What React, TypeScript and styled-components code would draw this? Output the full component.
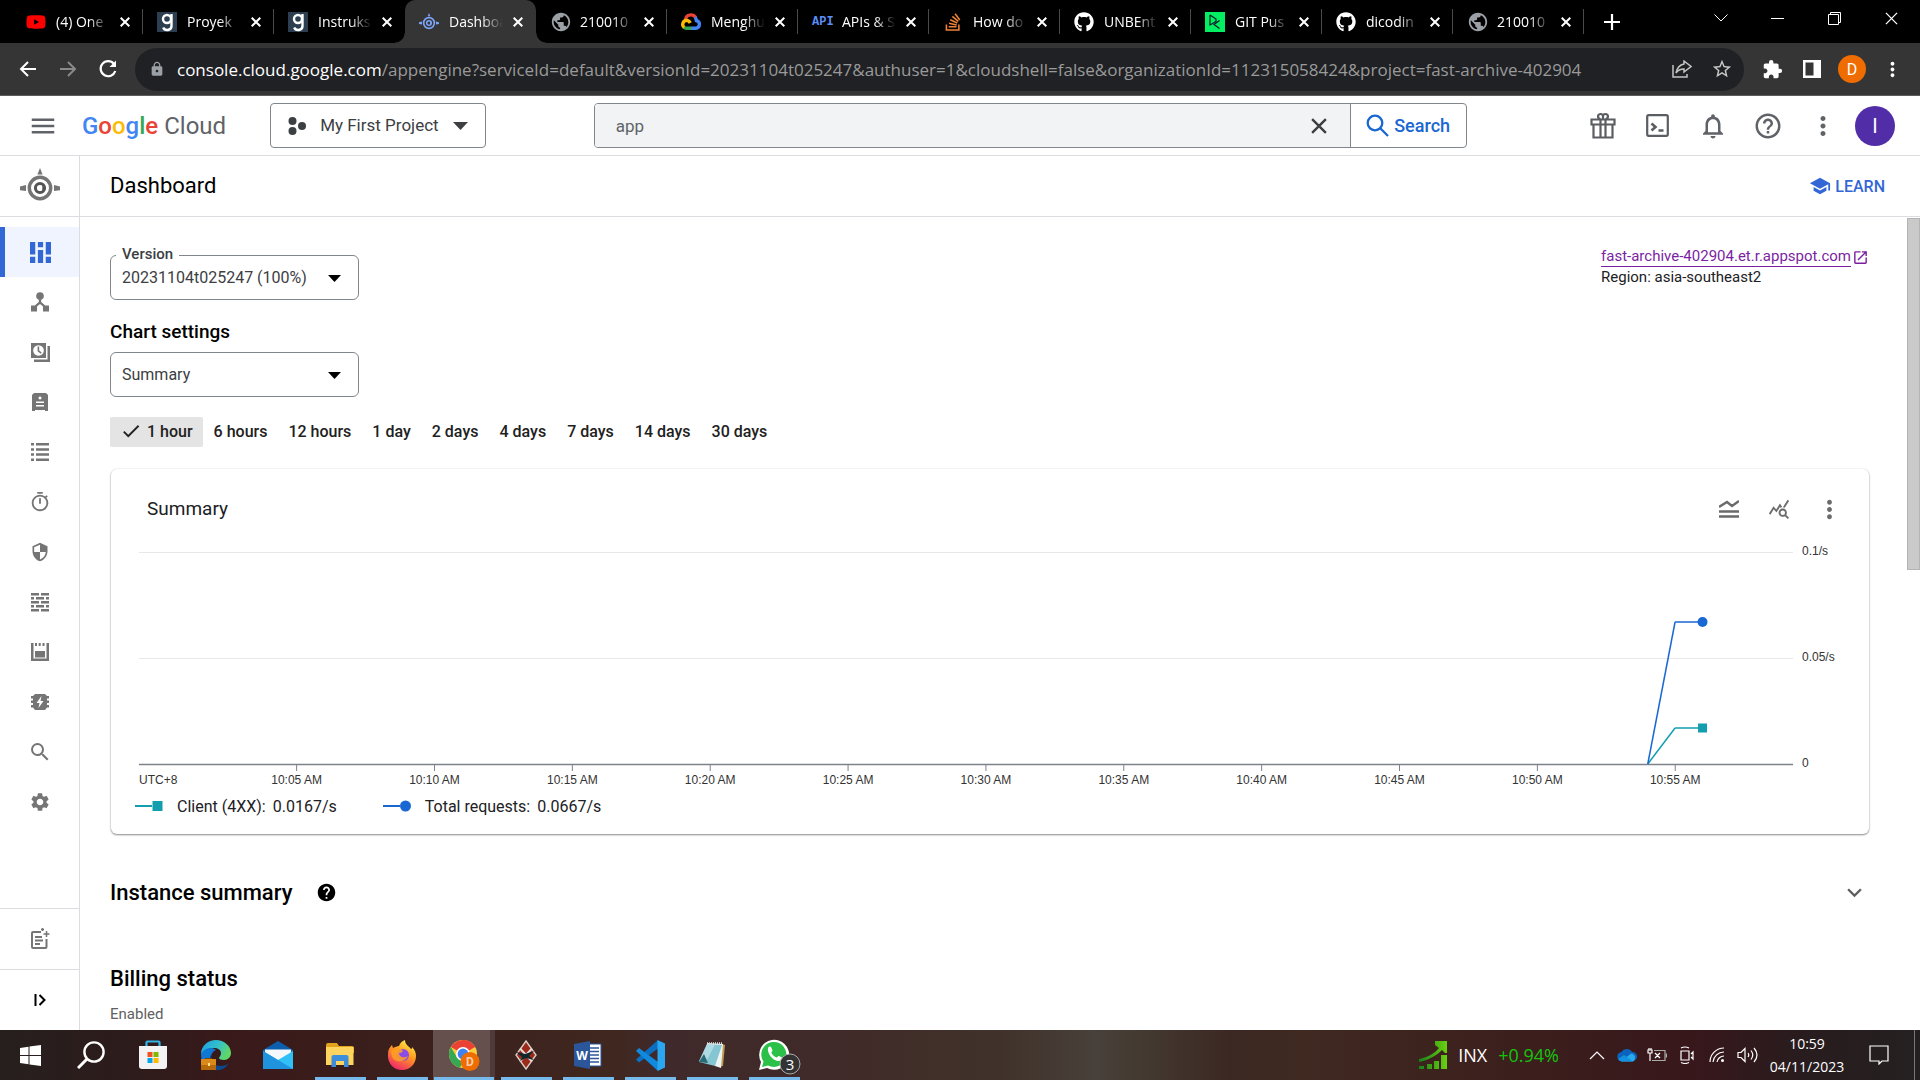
import React from "react";
import styled, { createGlobalStyle, css } from "styled-components";
import {
  MdMenu, MdSearch, MdHelpOutline, MdMoreVert, MdNotificationsNone, MdSchool, MdOpenInNew,
  MdSecurity, MdSettings, MdHelp, MdExpandMore, MdCheck, MdExtension, MdStarBorder, MdLock,
  MdPublic, MdOutlineTimer, MdQueryStats,
} from "react-icons/md";
import { FaGithub, FaStackOverflow, FaYoutube } from "react-icons/fa";

const roboto = `Roboto, "Noto Sans", sans-serif`;
const segoe = `"Open Sans", "Noto Sans", sans-serif`;

const GlobalStyle = createGlobalStyle`
  *, *::before, *::after { box-sizing: border-box; }
  body { margin: 0; font-family: ${roboto}; color: #000; background: #fff; }
  button, input, select { font: inherit; color: inherit; border: 0; background: none; padding: 0; margin: 0; }
  button { cursor: pointer; }
  h1, h2, h3, p { margin: 0; }
  svg { display: block; flex: none; }
`;

/* ---------- Browser window ---------- */

const Desktop = styled.div`
  display: flex;
  flex-direction: column;
  height: 100vh;
  overflow: hidden;
`;

const TabStrip = styled.div`
  display: flex;
  height: 43px;
  padding-left: 12px;
  background: #000;
  color: #fff;
  font-family: ${segoe};
  flex: none;
`;

const tabLine = css`
  &::after {
    content: "";
    position: absolute;
    right: 0;
    top: 9px;
    width: 1px;
    height: 25px;
    background: #4a4a4a;
  }
`;

const tabFlare = css`
  &::before, &::after {
    content: "";
    position: absolute;
    bottom: 0;
    width: 10px;
    height: 10px;
  }
  &::before { left: -10px; background: radial-gradient(circle at 0 0, transparent 9px, #353535 10px); }
  &::after { right: -10px; background: radial-gradient(circle at 100% 0, transparent 9px, #353535 10px); }
`;

const Tab = styled.div<{ $active?: boolean; $noLine?: boolean }>`
  position: relative;
  display: flex;
  align-items: center;
  width: 131px;
  padding: 0 13px 0 14px;
  gap: 10px;
  font-size: 14px;
  border-radius: 10px 10px 0 0;
  background: ${(p) => (p.$active ? "#353535" : "transparent")};
  ${(p) => (p.$active ? tabFlare : p.$noLine ? "" : tabLine)}
`;

const TabTitle = styled.span`
  flex: 1;
  min-width: 0;
  overflow: hidden;
  white-space: nowrap;
  mask-image: linear-gradient(to right, #000 60%, transparent 100%);
`;

const BareButton = styled.button`
  display: flex;
  align-items: center;
  justify-content: center;
  flex: none;
`;

const NewTab = styled(BareButton)`
  width: 55px;
`;

const WindowButtons = styled.div`
  display: flex;
  margin-left: auto;
  padding-bottom: 7px;
  ${BareButton} { width: 57px; }
`;

const Toolbar = styled.div`
  display: flex;
  align-items: center;
  height: 53px;
  padding: 0 8px;
  background: #353535;
  border-bottom: 1px solid #5c5c5c;
  color: #fff;
  font-family: ${segoe};
  flex: none;
  & > ${BareButton} { width: 40px; height: 40px; }
`;

const AddressBar = styled.div`
  display: flex;
  align-items: center;
  flex: 1;
  height: 43px;
  margin: 0 8px 0 7px;
  padding: 0 2px 0 14px;
  border-radius: 22px;
  background: #202124;
  ${BareButton} { width: 40px; height: 40px; }
`;

const Address = styled.p`
  flex: 1;
  margin-left: 12px;
  font-size: 17px;
  white-space: nowrap;
  overflow: hidden;
  color: #9a9a9a;
  b { font-weight: 400; color: #fff; }
`;

const Profile = styled.span`
  display: grid;
  place-items: center;
  width: 28px;
  height: 28px;
  border-radius: 50%;
  background: #ef6c00;
  font: 16px ${roboto};
`;

/* ---------- Cloud console ---------- */

const Page = styled.div`
  display: flex;
  flex-direction: column;
  flex: 1;
  min-height: 0;
`;

const Header = styled.header`
  display: flex;
  align-items: center;
  height: 60px;
  padding: 0 25px 0 28px;
  border-bottom: 1px solid #dadce0;
  color: #5f6368;
  flex: none;
`;

const Logo = styled.a`
  display: flex;
  gap: 6px;
  margin-left: 24px;
  font-size: 24px;
  text-decoration: none;
  color: #5f6368;
`;

const Letter = styled.span<{ $c: string }>`
  color: ${(p) => p.$c};
  font-weight: 500;
`;

const ProjectButton = styled.button`
  display: flex;
  align-items: center;
  gap: 12px;
  height: 45px;
  margin-left: 44px;
  padding: 0 17px;
  border: 1px solid #80868b;
  border-radius: 4px;
  font-size: 17px;
  color: #3c4043;
  span { padding: 0 2px 2px; }
`;

const SearchBox = styled.form`
  display: flex;
  width: 873px;
  height: 45px;
  margin-left: 108px;
  border: 1px solid #80868b;
  border-radius: 4px;
  overflow: hidden;
`;

const SearchField = styled.div`
  display: flex;
  flex: 1;
  background: #f1f3f4;
  border-right: 1px solid #80868b;
  color: #3c4043;
  input { flex: 1; padding: 0 21px; font-size: 17px; color: #5f6368; outline: none; }
  button { width: 62px; }
`;

const SearchButton = styled.button`
  display: flex;
  align-items: center;
  justify-content: center;
  gap: 5px;
  width: 115px;
  font-size: 18px;
  font-weight: 500;
  color: #1967d2;
`;

const HeaderIcons = styled.nav`
  display: flex;
  align-items: center;
  margin-left: auto;
  ${BareButton} { width: 55px; height: 40px; }
`;

const Avatar = styled.button`
  width: 40px;
  height: 40px;
  margin-left: 5px;
  border-radius: 50%;
  background: #512da8;
  color: #fff;
  font-size: 20px;
`;

const Body = styled.div`
  display: flex;
  flex: 1;
  min-height: 0;
`;

const Rail = styled.nav`
  display: flex;
  flex-direction: column;
  width: 80px;
  flex: none;
  border-right: 1px solid #dadce0;
  color: #757575;
`;

const RailCell = styled.div<{ $edge: "top" | "bottom" }>`
  display: grid;
  place-items: center;
  height: 61px;
  flex: none;
  border-${(p) => p.$edge}: 1px solid #dadce0;
`;

const RailList = styled.div`
  flex: 1;
  padding-top: 10px;
`;

const RailLink = styled.a<{ $active?: boolean }>`
  display: grid;
  place-items: center;
  height: 50px;
  padding-right: ${(p) => (p.$active ? 4 : 0)}px;
  color: ${(p) => (p.$active ? "#3367d6" : "#757575")};
  background: ${(p) => (p.$active ? "#f0f4fe" : "transparent")};
  border-left: ${(p) => (p.$active ? "5px solid #3367d6" : "0")};
`;

const Main = styled.main`
  display: flex;
  flex-direction: column;
  flex: 1;
  min-width: 0;
`;

const TitleBar = styled.div`
  display: flex;
  align-items: center;
  justify-content: space-between;
  height: 61px;
  padding: 0 35px 0 30px;
  border-bottom: 1px solid #dadce0;
  flex: none;
  h1 { padding-bottom: 2px; font-size: 22px; font-weight: 400; }
`;

const Learn = styled.button`
  display: flex;
  align-items: center;
  gap: 4px;
  font-size: 16px;
  font-weight: 500;
  color: #3367d6;
`;

const Scroller = styled.div`
  display: flex;
  flex: 1;
  min-height: 0;
`;

const ScrollTrack = styled.div`
  width: 13px;
  padding-top: 1px;
  flex: none;
`;

const ScrollThumb = styled.div`
  height: 352px;
  background: #cacaca;
  border: 1px solid #b4b4b4;
`;

const Content = styled.div`
  flex: 1;
  min-width: 0;
  padding: 30px 38px 0 30px;
  overflow: hidden;
`;

const TopRow = styled.div`
  display: flex;
  justify-content: space-between;
  align-items: flex-start;
`;

const Location = styled.div`
  font-size: 15px;
  line-height: 20px;
  color: #202124;
`;

const AppLink = styled.a`
  display: flex;
  align-items: center;
  gap: 1px;
  color: #7b1fa2;
  text-decoration: none;
  span { border-bottom: 1px solid #7b1fa2; line-height: 19px; }
`;

const Field = styled.div`
  position: relative;
  width: 249px;
  height: 45px;
  border: 1px solid #80868b;
  border-radius: 6px;
  label {
    position: absolute;
    left: 5px;
    top: -12px;
    padding: 0 6px;
    background: #fff;
    font-size: 15px;
    line-height: 20px;
    font-weight: 500;
    color: #3c4043;
  }
  select {
    width: 100%;
    height: 100%;
    padding-left: 11px;
    appearance: none;
    font-size: 16px;
    color: #3c4043;
    outline: none;
  }
  svg { position: absolute; right: 17px; top: 19px; pointer-events: none; }
`;

const Versions = styled.div`
  padding-top: 8px;
`;

const SettingsTitle = styled.h3`
  margin: 20px 0 8px;
  font-size: 19px;
  line-height: 24px;
  font-weight: 500;
`;

const Ranges = styled.div`
  display: flex;
  gap: 1px;
  margin-top: 20px;
`;

const Range = styled.button<{ $on?: boolean }>`
  display: flex;
  align-items: center;
  gap: 5px;
  height: 30px;
  padding: 0 10px 2px;
  border-radius: 2px;
  font-size: 16px;
  font-weight: 500;
  color: #212121;
  background: ${(p) => (p.$on ? "#e4e4e4" : "transparent")};
`;

const Card = styled.section`
  margin: 22px 0 0 1px;
  padding: 15px 0 14px;
  border-radius: 6px;
  box-shadow: 0 1px 2px rgba(0, 0, 0, 0.45), 0 0 2px rgba(0, 0, 0, 0.1);
`;

const CardHead = styled.div`
  display: flex;
  align-items: center;
  height: 50px;
  padding: 0 15px 0 36px;
  color: #6b6b6b;
  h2 { flex: 1; padding-bottom: 2px; font-size: 19px; font-weight: 400; color: #202124; }
  ${BareButton} { width: 50px; height: 50px; }
`;

const ChartArea = styled.div`
  padding: 0 76px 0 28px;
  & > svg { width: 100%; height: 256px; overflow: visible; }
  text { font: 12px "Liberation Sans", Arial, sans-serif; fill: #333; }
`;

const Legend = styled.div`
  display: flex;
  gap: 46px;
  height: 30px;
  padding: 2px 0 0 24px;
`;

const LegendItem = styled.div`
  display: flex;
  align-items: center;
  font-size: 16px;
  color: #202124;
  svg { margin-right: 14px; }
  span { margin-right: 7px; }
`;

const SectionHead = styled.div<{ $gap: number }>`
  display: flex;
  align-items: center;
  margin-top: ${(p) => p.$gap}px;
  height: 32px;
  h2 { font-size: 22px; font-weight: 500; margin-right: 24px; }
  button { margin-left: auto; color: #5f5f5f; }
`;

const Status = styled.p`
  margin-top: 10px;
  font-size: 15px;
  line-height: 20px;
  color: #616161;
`;

/* ---------- Windows taskbar ---------- */

const Taskbar = styled.footer`
  display: flex;
  height: 50px;
  flex: none;
  color: #fff;
  font-family: ${segoe};
  background: linear-gradient(90deg, #261f1e 0%, #2d1c1b 7%, #3a191a 12%, #3a1f1c 20%, #40271f 32%, #40292a 34%, #402b29 45%, #40322a 52%, #48403a 57%, #42382f 60%, #3c2823 64%, #3f2921 68%, #3c201d 78%, #38171b 88%, #281c1e 94%, #242021 100%);
`;

const TaskButton = styled.button<{ $w: number; $open?: boolean; $active?: boolean }>`
  position: relative;
  display: grid;
  place-items: center;
  width: ${(p) => p.$w}px;
  background: ${(p) => (p.$active ? "linear-gradient(90deg, #65504d 57px, #50393a 57px)" : "transparent")};
  &::after {
    content: "";
    position: absolute;
    left: ${(p) => (p.$active ? 1 : 6)}px;
    right: ${(p) => (p.$active ? 1 : 5)}px;
    bottom: 0;
    height: ${(p) => (p.$open ? 3 : 0)}px;
    background: #76b9ed;
  }
`;

const Tray = styled.div`
  display: flex;
  align-items: center;
  margin-left: auto;
`;

const Stock = styled.button`
  display: flex;
  align-items: center;
  gap: 11px;
  margin-right: 23px;
  font-size: 18px;
  span { color: #13c40f; }
`;

const TrayButton = styled(BareButton)`
  width: 30px;
  height: 50px;
`;

const Clock = styled.time`
  width: 90px;
  font-size: 14px;
  line-height: 23px;
  text-align: center;
`;

const Notifications = styled(BareButton)`
  width: 54px;
  height: 50px;
`;

const ShowDesktop = styled.div`
  width: 6px;
  height: 50px;
  margin-left: 8px;
  border-left: 1px solid #7b7474;
`;

/* ---------- Drawings ---------- */

const CloseMark = ({ s = 10, w = 2 }: { s?: number; w?: number }) => (
  <svg width={s} height={s} viewBox="0 0 10 10" stroke="currentColor" strokeWidth={w}>
    <path d="M.7.7l8.6 8.6M9.3.7L.7 9.3" />
  </svg>
);

const AppEngine = ({ size, color, core = color }: { size: number; color: string; core?: string }) => (
  <svg width={size} height={size} viewBox="0 0 40 40" fill="none">
    <circle cx="20" cy="22" r="10.7" stroke={color} strokeWidth="3.4" />
    <circle cx="20" cy="22" r="4.6" stroke={core} strokeWidth="3" />
    <path d="M22.5 17.5l2 1.5v5l-2.5 3.500z" fill={core} />
    <path d="M20 2l2.600 6.500h-5.200zM0 20.500l6-1.500v6l-6-.8zM40 20.500L34 19v6l6-.8z" fill={color} />
  </svg>
);

const GBadge = () => (
  <svg width="20" height="20" viewBox="0 0 20 20">
    <rect width="20" height="20" fill="#2d3e50" />
    <circle cx="10" cy="7" r="4" fill="none" stroke="#fff" strokeWidth="2.400" />
    <path d="M14.500 2v12a4.300 4 0 0 1-8.300 1.500" fill="none" stroke="#fff" strokeWidth="2.400" />
  </svg>
);

const CloudLogo = () => (
  <svg width="20" height="18" viewBox="0 0 20 18" fill="none" strokeWidth="3.400">
    <path d="M4.500 6.500C5 3.500 7.500 1.900 10 1.900c2 0 3.700 1 4.600 2.600" stroke="#ea4335" />
    <path d="M14 4.200c1 1 1.300 2 1.400 3.500a3.800 3.800 0 0 1-.6 7.500H10" stroke="#4285f4" />
    <path d="M10.500 15.200H5.500c-1 0-2-.4-2.700-1" stroke="#34a853" />
    <path d="M3.200 14.500A4 4 0 0 1 5.500 7.400c2 0 3 1 3.700 2.600" stroke="#fbbc04" />
  </svg>
);

const ApiMark = styled.span`
  font: 700 12px "Liberation Mono", monospace;
  color: #5c8df6;
`;

const DcMark = () => (
  <svg width="20" height="20" viewBox="0 0 20 20" fill="none" stroke="#05192d" strokeWidth="1.200">
    <rect width="20" height="20" fill="#03ef62" stroke="none" />
    <path d="M5 3v10l6-3.500V7L5 3M14.500 8.500L9 12.500l5.500 4" />
  </svg>
);

const Caret = () => (
  <svg width="13" height="7" viewBox="0 0 13 7"><path d="M0 0h13L6.500 7z" fill="#000" /></svg>
);

const Gift = () => (
  <svg width="26" height="28" viewBox="0 0 26 28" fill="none" stroke="#5a5d61" strokeWidth="2.200">
    <path d="M1.500 7.500h23v5h-23zM3.500 12.500h19v13h-19zM10.500 7.500v18M15.500 7.500v18" />
    <path d="M13 7V4a2.500 2.500 0 1 0-2.500 3M13 7V4a2.500 2.500 0 1 1 2.500 3" />
  </svg>
);

const Shell = () => (
  <svg width="23" height="23" viewBox="0 0 23 23" fill="none" stroke="#5a5d61" strokeWidth="2.200">
    <rect x="1.200" y="1.200" width="20.600" height="20.600" rx="1.500" />
    <path d="M5.500 9.500l4 3.500-4 3.500M12.500 16.500h5" strokeWidth="2.600" />
  </svg>
);

const grid = (d: React.ReactNode, size = 20) => (
  <svg width={size} height={size} viewBox="0 0 20 20" fill="currentColor">{d}</svg>
);

const railIcons = [
  { name: "Dashboard", icon: grid(<path d="M0 0h5v12H0zM0 14h5v6H0zM7.500 0h5v5h-5zM7.500 7.500h5V20h-5zM15 0h5v12h-5zM15 14h5v6h-5z" />, 21) },
  { name: "Services", icon: grid(<><circle cx="10" cy="4" r="3.800" /><path d="M8.800 6h2.400v4l4 3.500H19v6h-6v-5l-3-2.500-3 2.500v5H1v-6h3.800l4-3.500z" /></>) },
  { name: "Versions", icon: grid(<><path fillRule="evenodd" d="M1 1h15v15H1zM8.500 3.200a5.300 5.300 0 1 0 .01 0z" /><path d="M17.500 4H20v16H4v-2.500h13.500zM7.600 4.500h1.600v4l2.500 2-1 1.200-3.100-2.400z" /></>) },
  { name: "Instances", icon: grid(<path fillRule="evenodd" d="M4 1h12l2 2v16h-3v-1H5v1H2V3zM10 4.500a1.500 1.500 0 1 0 .01 0zM6 9.500V11h8V9.500zM6 13v1.500h8V13z" />) },
  { name: "Task queues", icon: grid(<path d="M1 1h3v2.500H1zM6 1h13v2.500H6zM1 6.200h3v2.500H1zM6 6.200h13v2.500H6zM1 11.300h3v2.500H1zM6 11.300h13v2.500H6zM1 16.500h3V19H1zM6 16.500h13V19H6z" />) },
  { name: "Cron jobs", icon: <MdOutlineTimer size={22} /> },
  { name: "Security scans", icon: <MdSecurity size={20} /> },
  { name: "Firewall rules", icon: grid(<path d="M1 1h8v2.500H1zM11 1h8v2.500h-8zM1 5h3v2.500H1zM6 5h8v2.500H6zM16 5h3v2.500h-3zM1 9h8v2.500H1zM11 9h8v2.500h-8zM1 13h3v2.500H1zM6 13h8v2.500H6zM16 13h3v2.500h-3zM1 17h8v2.500H1zM11 17h8v2.500h-8z" />) },
  { name: "Quotas", icon: grid(<path d="M1 1h2.500v15.500h13V1H19v18H1zM5 9h10v6.500H5zM5 1h2v3H5zM8.700 1h2v3h-2zM12.500 1h2v3h-2z" />) },
  { name: "Memcache", icon: grid(<path fillRule="evenodd" d="M5 2h10l2 2h2v2.500h-2V8.500h2V11h-2v2h2v2.500h-2L15 18H5l-2-2.500H1V13h2v-2H1V8.500h2V6.500H1V4h2zM11.500 4L6.500 11h3L8.500 16l5-7h-3z" />) },
  { name: "Search", icon: <MdSearch size={24} /> },
  { name: "Settings", icon: <MdSettings size={22} /> },
];

const ReleaseNotes = () => (
  <svg width="20" height="24" viewBox="0 0 20 24" fill="none" stroke="#757575" strokeWidth="2">
    <path d="M11 5H3a1 1 0 0 0-1 1v14a1 1 0 0 0 1 1h12.500a1 1 0 0 0 1-1v-8M5 10h7M5 13.500h8M5 17h5" />
    <path d="M16.500 4v6M13.500 7h6M12.500 1v3M11 2.500h3" strokeWidth="1.500" />
  </svg>
);

const ExpandRail = () => (
  <svg width="14" height="14" viewBox="0 0 14 14" fill="none" stroke="#000" strokeWidth="2">
    <path d="M2.500 1v12M6.500 2l5 5-5 5" />
  </svg>
);

const Stacked = () => (
  <svg width="20" height="18" viewBox="0 0 20 18" fill="none" stroke="#6b6b6b" strokeWidth="2.400">
    <path d="M0 7l8-5 5 4 7-5M0 11.500h20M0 16.500h20" />
  </svg>
);

const Chart = () => {
  const ticks = ["10:05", "10:10", "10:15", "10:20", "10:25", "10:30", "10:35", "10:40", "10:45", "10:50", "10:55"];
  return (
    <svg role="img" aria-label="Requests per second over the last hour">
      {[18, 124, 230].map((y, i) => (
        <line key={y} x1="0" x2="100%" y1={y + 0.5} y2={y + 0.5} stroke={i === 2 ? "#7d828a" : "#e8e8e8"} strokeWidth={i === 2 ? 1.5 : 1} />
      ))}
      {["0.1/s", "0.05/s", "0"].map((t, i) => (
        <text key={t} x="100%" dx="9" y={21 + i * 106}>{t}</text>
      ))}
      <text x="0" y="250">UTC+8</text>
      {ticks.map((t, i) => {
        const x = `${9.53 + i * 8.335}%`;
        return (
          <g key={t}>
            <line x1={x} x2={x} y1="231" y2="237" stroke="#7d828a" />
            <text x={x} y="250" textAnchor="middle">{t} AM</text>
          </g>
        );
      })}
      <line x1="91.22%" y1="230" x2="92.87%" y2="194" stroke="#129eaf" strokeWidth="1.500" />
      <line x1="92.87%" y1="194" x2="94.53%" y2="194" stroke="#129eaf" strokeWidth="1.500" />
      <line x1="91.22%" y1="230" x2="92.87%" y2="88" stroke="#1967d2" strokeWidth="1.500" />
      <line x1="92.87%" y1="88" x2="94.53%" y2="88" stroke="#1967d2" strokeWidth="1.500" />
      <circle cx="94.53%" cy="88" r="5" fill="#1967d2" />
      <svg x="94.53%" y="194" overflow="visible"><rect x="-4.500" y="-4.500" width="9" height="9" fill="#129eaf" /></svg>
    </svg>
  );
};

const WindowsLogo = () => (
  <svg width="21" height="21" viewBox="0 0 21 21" fill="#fff"><path d="M0 3l8.500-1.200V10H0zM9.500 1.600L21 0v10H9.500zM0 11h8.500v8.200L0 18zM9.500 11H21v10L9.500 19.400z" /></svg>
);
const TaskSearch = () => (
  <svg width="28" height="28" viewBox="0 0 28 28" fill="none" stroke="#fff" strokeWidth="2.400"><circle cx="17" cy="11" r="9.600" /><path d="M10 18l-9 9" strokeWidth="3" /></svg>
);
const Store = () => (
  <svg width="30" height="30" viewBox="0 0 30 30">
    <path d="M8.500 7V2.500a1 1 0 0 1 1-1h11a1 1 0 0 1 1 1V7" fill="none" stroke="#35b4ea" strokeWidth="2.200" />
    <path d="M1 6h28v20a3 3 0 0 1-3 3H4a3 3 0 0 1-3-3z" fill="#f3f3f3" />
    <path d="M9.500 12h5v5h-5z" fill="#f25022" /><path d="M15.500 12h5v5h-5z" fill="#7fba00" />
    <path d="M9.500 18h5v5h-5z" fill="#00a4ef" /><path d="M15.500 18h5v5h-5z" fill="#ffb900" />
  </svg>
);
const Edge = () => (
  <svg width="32" height="32" viewBox="0 0 32 32">
    <defs><linearGradient id="edge" x1="0" y1="0" x2="1" y2="0.400"><stop offset="0" stopColor="#1b9de2" /><stop offset="0.600" stopColor="#35c1c9" /><stop offset="1" stopColor="#5fd668" /></linearGradient></defs>
    <path d="M1 15C1 7 8 1 16 1s15 6 15 13c0 4-3 7-7 7-3 0-5-1-5-2s2-2 2-5c0-3-3-5-7-5-6 0-10 3-13 6z" fill="url(#edge)" />
    <path d="M1 15c2-4 6-6 10-6 2 0 4 1 5 2-3 1-5 4-5 8 0 5 4 9 8 10-3 2-6 2-8 1C5 29 1 23 1 15z" fill="#0f78d4" />
    <path d="M12 14c-3 7 2 13 9 13 3 0 6-1 8-3-3 5-8 8-13 7-6-1-9-10-4-17z" fill="#0b4a8f" />
    <path d="M5 19h7v2H5z" fill="#7b4509" /><path d="M1 20h15v11H1z" fill="#b5690b" /><path d="M1 20h15v6H1z" fill="#d98a1a" /><path d="M8 24h2v3H8z" fill="#ffe08a" />
  </svg>
);
const Mail = () => (
  <svg width="32" height="30" viewBox="0 0 32 30">
    <path d="M1 10L16 1l15 9v7H1z" fill="#0b5fad" /><path d="M3 9.500h26V20H3z" fill="#f5f8fb" />
    <path d="M1 11l15 9L31 11v18H1z" fill="#31c0f5" /><path d="M1 11l15 9 15 9H1z" fill="#1f93de" />
  </svg>
);
const Explorer = () => (
  <svg width="28" height="26" viewBox="0 0 28 26">
    <path d="M0 3a2 2 0 0 1 2-2h9l2 3h13a2 2 0 0 1 2 2v5H0z" fill="#e0a31b" /><path d="M0 5h27.500v18H0z" fill="#ffd45e" />
    <path d="M5.500 25V15a2 2 0 0 1 2-2h13a2 2 0 0 1 2 2v10H18v-6h-8v6z" fill="#3c8edb" />
  </svg>
);
const Firefox = () => (
  <svg width="30" height="30" viewBox="0 0 30 30">
    <defs><linearGradient id="fox" x1="0.800" y1="0" x2="0.300" y2="1"><stop offset="0" stopColor="#fff44f" /><stop offset="0.450" stopColor="#ff9a1f" /><stop offset="1" stopColor="#f0256d" /></linearGradient></defs>
    <path d="M2 9c1-2 2-3 3-4l1 3c2-1 4-2 6-2 1-3 3-5 6-6 0 5 4 6 6 9 1 0 1-1 1-2 3 3 4 6 4 9 0 8-6 14-14 14S1 24 1 16c0-3 0-5 1-7z" fill="url(#fox)" />
    <circle cx="16" cy="15" r="6" fill="#8a4be8" /><path d="M4 11c4-3 8-3 11-1 2 1 0 3-3 3 0 3 4 6 9 3-3 7-13 7-16 1z" fill="#ffa021" opacity=".85" />
  </svg>
);
const Chrome = () => (
  <svg width="32" height="32" viewBox="0 0 32 32">
    <circle cx="15" cy="15" r="14" fill="#ffcd40" />
    <path d="M15 15L2.900 8A14 14 0 0 1 27.100 8z" fill="#ea4335" /><path d="M15 1a14 14 0 0 1 12.100 7H15z" fill="#ea4335" />
    <path d="M2.900 8L9 18.500l6 3.500-3 6.700A14 14 0 0 1 2.900 8z" fill="#34a853" />
    <circle cx="15" cy="15" r="7" fill="#fff" /><circle cx="15" cy="15" r="5.400" fill="#3c82f0" />
    <circle cx="22" cy="22.500" r="9.500" fill="#ef6c00" /><text x="22" y="27" fontSize="12" fontWeight="700" textAnchor="middle" fill="#fbcfae" fontFamily="Roboto, sans-serif">D</text>
  </svg>
);
const Diamond = () => (
  <svg width="22" height="30" viewBox="0 0 22 30">
    <path d="M11 1l10 14-10 14L1 15z" fill="#9c2a1a" stroke="#d9cdc8" strokeWidth="1.400" /><path d="M5 8.500l12 13M17 8.500L5 21.500" stroke="#e5dcd8" strokeWidth="2" />
    <path d="M1 12l5 1 4 1 9-3-5 5 5 4-8-2-6 3 2-4z" fill="#10282c" />
  </svg>
);
const Word = () => (
  <svg width="28" height="28" viewBox="0 0 28 28">
    <path d="M13 3h14v22H13z" fill="#fff" stroke="#2b579a" /><path d="M16 7h9M16 10.500h9M16 14h9M16 17.500h9M16 21h9" stroke="#2b579a" strokeWidth="1.500" />
    <path d="M0 3l16-3v28L0 25z" fill="#2b579a" /><text x="8" y="18.500" fontSize="12" fontWeight="700" textAnchor="middle" fill="#fff" fontFamily="Open Sans, sans-serif">W</text>
  </svg>
);
const VsCode = () => (
  <svg width="31" height="31" viewBox="0 0 31 31">
    <path d="M1 19.500L4 22.500 23 8.500V0z" fill="#0a6fc0" />
    <path d="M1 11L4 8l19 14v9z" fill="#0f8ade" />
    <path d="M22.500 0L30 3.500v24L22.500 31z" fill="#2aa7f0" />
  </svg>
);
const Notepad = () => (
  <svg width="28" height="28" viewBox="0 0 28 28">
    <path d="M24 3l3 1-2 21-4 1z" fill="#b99b52" /><path d="M9 2l16 1-2 24-6-2z" fill="#eef2f3" />
    <path d="M9 3l15 1-7 21-16-4z" fill="#86c5d2" /><path d="M9 3l8 .5L8 21l-7-1z" fill="#b7dfe7" opacity=".8" />
    <path d="M1 21l5-8 4 9z" fill="#2a6a74" /><path d="M9 2.500h15" stroke="#ddd" strokeWidth="2.500" strokeDasharray="1 1" />
  </svg>
);
const WhatsApp = () => (
  <svg width="32" height="34" viewBox="0 0 32 34" overflow="visible">
    <path d="M1 32l2-8A15 15 0 1 1 9 30z" fill="#fff" /><path d="M4 29l1.500-5.500A12.500 12.500 0 1 1 10 27.500z" fill="#2bc148" />
    <path d="M10 10c1-2 3-2 3.500 0l1 2.500c0 1-1.500 1.500-1 2.500 1 2 3 4 5 4.500 1 0 1.500-2 2.500-1.500l3 1.500c1 2-2 4-4.500 3.500C14 22 9 15 10 10z" fill="#fff" />
    <circle cx="32" cy="26" r="10" fill="#333" stroke="#aaa" /><text x="32" y="31.500" fontSize="15" textAnchor="middle" fill="#fff" fontFamily="Open Sans, sans-serif">3</text>
  </svg>
);
const StockIcon = () => (
  <svg width="28" height="28" viewBox="0 0 28 28">
    <defs><linearGradient id="stock" x1="0" x2="1"><stop offset="0" stopColor="#17801a" /><stop offset="1" stopColor="#6ad010" /></linearGradient></defs>
    <path d="M0 18c9-2 15-5 20-11l-4-3V0h12v12h-2l-3-3C17 15 9 19 0 21zM0 25h5v3H0zM8 23h5v5H8zM15 20h5v8h-5zM22 14h6v14h-6z" fill="url(#stock)" />
  </svg>
);

const tabs: { title: string; icon: React.ReactNode; active?: boolean; noLine?: boolean }[] = [
  { title: "(4) One", icon: <FaYoutube size={20} color="#f00" /> },
  { title: "Proyek", icon: <GBadge /> },
  { title: "Instruks", icon: <GBadge />, noLine: true },
  { title: "Dashboa", icon: <AppEngine size={20} color="#7ba2f5" />, active: true },
  { title: "210010", icon: <MdPublic size={22} color="#9aa0a6" /> },
  { title: "Menghu", icon: <CloudLogo /> },
  { title: "APIs & S", icon: <ApiMark>API</ApiMark> },
  { title: "How do", icon: <FaStackOverflow size={20} color="#ef8236" /> },
  { title: "UNBEnt", icon: <FaGithub size={20} /> },
  { title: "GIT Pus", icon: <DcMark /> },
  { title: "dicodin", icon: <FaGithub size={20} /> },
  { title: "210010", icon: <MdPublic size={22} color="#9aa0a6" /> },
];

const TabIcon = styled.span`
  display: grid;
  place-items: center;
  width: 20px;
  flex: none;
`;

const arrow = (d: string, color = "#fff") => (
  <svg width="18" height="18" viewBox="0 0 18 18" fill="none" stroke={color} strokeWidth="2"><path d={d} /></svg>
);

const BrowserChrome = () => (
  <>
    <TabStrip>
      {tabs.map((t, i) => (
        <Tab key={i} $active={t.active} $noLine={t.noLine}>
          <TabIcon>{t.icon}</TabIcon>
          <TabTitle>{t.title}</TabTitle>
          <BareButton aria-label="Close tab"><CloseMark /></BareButton>
        </Tab>
      ))}
      <NewTab aria-label="New tab">
        <svg width="16" height="16" viewBox="0 0 16 16" stroke="#fff" strokeWidth="2.200"><path d="M8 0v16M0 8h16" /></svg>
      </NewTab>
      <WindowButtons>
        <BareButton aria-label="Search tabs"><svg width="14" height="8" viewBox="0 0 14 8" fill="none" stroke="#fff"><path d="M.5.5L7 7 13.500.5" /></svg></BareButton>
        <BareButton aria-label="Minimize"><svg width="13" height="1" viewBox="0 0 13 1"><path d="M0 0h13v1H0z" fill="#fff" /></svg></BareButton>
        <BareButton aria-label="Restore"><svg width="13" height="13" viewBox="0 0 13 13" fill="none" stroke="#fff"><path d="M.5 2.500h10v10H.5zM2.500 2.500v-2h10v10h-2" /></svg></BareButton>
        <BareButton aria-label="Close window"><CloseMark s={13} w={1} /></BareButton>
      </WindowButtons>
    </TabStrip>
    <Toolbar>
      <BareButton aria-label="Back">{arrow("M17 9H2M9 2L2 9l7 7")}</BareButton>
      <BareButton aria-label="Forward">{arrow("M1 9h15M9 2l7 7-7 7", "#8a8a8a")}</BareButton>
      <BareButton aria-label="Reload">
        <svg width="20" height="20" viewBox="0 0 20 20" fill="none" stroke="#fff" strokeWidth="2.200"><path d="M16 5a7.500 7.500 0 1 0 1.300 7" /><path d="M18 1.500V8h-6.500z" fill="#fff" stroke="none" /></svg>
      </BareButton>
      <AddressBar>
        <MdLock size={16} color="#9aa0a6" />
        <Address><b>console.cloud.google.com</b>/appengine?serviceId=default&amp;versionId=20231104t025247&amp;authuser=1&amp;cloudshell=false&amp;organizationId=112315058424&amp;project=fast-archive-402904</Address>
        <BareButton aria-label="Share">
          <svg width="20" height="18" viewBox="0 0 20 18" fill="none" stroke="#c4c4c4" strokeWidth="1.500"><path d="M1 5v12h14v-3M12 1l7 5.500-7 5.500V9c-4 0-6 1-8 4 1-5 3-8 8-9z" /></svg>
        </BareButton>
        <BareButton aria-label="Bookmark"><MdStarBorder size={22} color="#c8c8c8" /></BareButton>
      </AddressBar>
      <BareButton aria-label="Extensions"><MdExtension size={21} /></BareButton>
      <BareButton aria-label="Side panel">
        <svg width="18" height="18" viewBox="0 0 18 18"><path fillRule="evenodd" d="M0 0h18v18H0zM2.500 2.500v13h8v-13z" fill="#fff" /></svg>
      </BareButton>
      <BareButton aria-label="Profile"><Profile>D</Profile></BareButton>
      <BareButton aria-label="Menu"><MdMoreVert size={23} /></BareButton>
    </Toolbar>
  </>
);

const ConsoleHeader = () => (
  <Header>
    <BareButton aria-label="Navigation menu"><MdMenu size={30} /></BareButton>
    <Logo href="#home" aria-label="Google Cloud">
      <span>
        <Letter $c="#4285f4">G</Letter><Letter $c="#ea4335">o</Letter><Letter $c="#fbbc04">o</Letter>
        <Letter $c="#4285f4">g</Letter><Letter $c="#34a853">l</Letter><Letter $c="#ea4335">e</Letter>
      </span>
      <span>Cloud</span>
    </Logo>
    <ProjectButton>
      <svg width="18" height="18" viewBox="0 0 18 18" fill="#3c4043"><circle cx="4.500" cy="4" r="4" /><circle cx="4.500" cy="14" r="4" /><circle cx="14" cy="9" r="4" /></svg>
      <span>My First Project</span>
      <svg width="15" height="8" viewBox="0 0 15 8"><path d="M0 0h15L7.500 8z" fill="#3c4043" /></svg>
    </ProjectButton>
    <SearchBox>
      <SearchField>
        <input aria-label="Search resources" defaultValue="app" />
        <BareButton type="button" aria-label="Clear"><CloseMark s={16} w={1.5} /></BareButton>
      </SearchField>
      <SearchButton type="button">
        <svg width="23" height="23" viewBox="0 0 23 23" fill="none" stroke="#1967d2" strokeWidth="2.300"><circle cx="9" cy="9" r="7.300" /><path d="M14 14l8 8" /></svg>
        Search
      </SearchButton>
    </SearchBox>
    <HeaderIcons>
      <BareButton aria-label="Free trial"><Gift /></BareButton>
      <BareButton aria-label="Cloud Shell"><Shell /></BareButton>
      <BareButton aria-label="Notifications"><MdNotificationsNone size={30} /></BareButton>
      <BareButton aria-label="Help"><MdHelpOutline size={30} /></BareButton>
      <BareButton aria-label="More"><MdMoreVert size={30} /></BareButton>
      <Avatar aria-label="Account">I</Avatar>
    </HeaderIcons>
  </Header>
);

const ranges = ["6 hours", "12 hours", "1 day", "2 days", "4 days", "7 days", "14 days", "30 days"];

const Dashboard = () => (
  <Main>
    <TitleBar>
      <h1>Dashboard</h1>
      <Learn><MdSchool size={22} />LEARN</Learn>
    </TitleBar>
    <Scroller>
      <Content>
        <TopRow>
          <Versions>
            <Field>
              <label htmlFor="version">Version</label>
              <select id="version"><option>20231104t025247 (100%)</option></select>
              <Caret />
            </Field>
          </Versions>
          <Location>
            <AppLink href="#app"><span>fast-archive-402904.et.r.appspot.com</span><MdOpenInNew size={17} /></AppLink>
            <p>Region: asia-southeast2</p>
          </Location>
        </TopRow>
        <SettingsTitle>Chart settings</SettingsTitle>
        <Field>
          <select aria-label="Chart settings"><option>Summary</option></select>
          <Caret />
        </Field>
        <Ranges>
          <Range $on><MdCheck size={22} />1 hour</Range>
          {ranges.map((r) => <Range key={r}>{r}</Range>)}
        </Ranges>
        <Card>
          <CardHead>
            <h2>Summary</h2>
            <BareButton aria-label="Chart type"><Stacked /></BareButton>
            <BareButton aria-label="Explore data"><MdQueryStats size={22} /></BareButton>
            <BareButton aria-label="More options"><MdMoreVert size={29} /></BareButton>
          </CardHead>
          <ChartArea><Chart /></ChartArea>
          <Legend>
            <LegendItem>
              <svg width="28" height="12" viewBox="0 0 28 12"><path d="M0 5h17v2H0z" fill="#129eaf" /><path d="M17.500 1h10v10h-10z" fill="#129eaf" /></svg>
              <span>Client (4XX):</span>0.0167/s
            </LegendItem>
            <LegendItem>
              <svg width="28" height="12" viewBox="0 0 28 12"><path d="M0 5h17v2H0z" fill="#1967d2" /><circle cx="22.500" cy="6" r="5.500" fill="#1967d2" /></svg>
              <span>Total requests:</span>0.0667/s
            </LegendItem>
          </Legend>
        </Card>
        <SectionHead $gap={42}>
          <h2>Instance summary</h2>
          <MdHelp size={21} />
          <BareButton aria-label="Expand"><MdExpandMore size={29} /></BareButton>
        </SectionHead>
        <SectionHead $gap={54}><h2>Billing status</h2></SectionHead>
        <Status>Enabled</Status>
      </Content>
      <ScrollTrack><ScrollThumb /></ScrollTrack>
    </Scroller>
  </Main>
);

const tasks: { name: string; w: number; icon: React.ReactNode; open?: boolean; active?: boolean }[] = [
  { name: "Start", w: 60, icon: <WindowsLogo /> },
  { name: "Search", w: 61, icon: <TaskSearch /> },
  { name: "Microsoft Store", w: 64, icon: <Store /> },
  { name: "Edge", w: 62, icon: <Edge /> },
  { name: "Mail", w: 62, icon: <Mail /> },
  { name: "File Explorer", w: 62, icon: <Explorer />, open: true },
  { name: "Firefox", w: 62, icon: <Firefox />, open: true },
  { name: "Chrome", w: 62, icon: <Chrome />, open: true, active: true },
  { name: "Laragon", w: 62, icon: <Diamond />, open: true },
  { name: "Word", w: 62, icon: <Word />, open: true },
  { name: "Code", w: 62, icon: <VsCode />, open: true },
  { name: "Notepad", w: 62, icon: <Notepad />, open: true },
  { name: "WhatsApp", w: 62, icon: <WhatsApp />, open: true },
];

const thin = (w: number, h: number, d: string, extra?: React.ReactNode) => (
  <svg width={w} height={h} viewBox={`0 0 ${w} ${h}`} fill="none" stroke="#fff" strokeWidth="1.200"><path d={d} />{extra}</svg>
);

const WindowsTaskbar = () => (
  <Taskbar>
    {tasks.map((t) => (
      <TaskButton key={t.name} aria-label={t.name} $w={t.w} $open={t.open} $active={t.active}>{t.icon}</TaskButton>
    ))}
    <Tray>
      <Stock><StockIcon />INX<span>+0.94%</span></Stock>
      <TrayButton aria-label="Show hidden icons">{thin(16, 10, "M1 9l7-7 7 7")}</TrayButton>
      <TrayButton aria-label="OneDrive">
        <svg width="20" height="14" viewBox="0 0 20 14"><path d="M5 13a4.500 4.500 0 0 1-.5-9A6 6 0 0 1 15 4a4.500 4.500 0 0 1 1 9z" fill="#0b63bd" /><path d="M4 13.500L14 5.500a4.300 4.300 0 0 1 2 8z" fill="#28a8ea" /><path d="M1 11l6-4 9 6.500H4.500A4 4 0 0 1 1 11z" fill="#1490df" /></svg>
      </TrayButton>
      <TrayButton aria-label="Battery">
        {thin(20, 14, "M1 2h4v3H1zM2 0v2M4 0v2M3 5v8M8 5l5 5M13 5l-5 5", <path d="M7 2.500h11v10H5M19.500 5.500v4" stroke="#aaa" />)}
      </TrayButton>
      <TrayButton aria-label="Meet now">{thin(16, 18, "M2 5h8v9H2zM12 8l2-2v7l-2-2M2 2q4-2 8 0M2 16.500q4 2 8 0")}</TrayButton>
      <TrayButton aria-label="Network">{thin(16, 16, "M1 15A14 14 0 0 1 15 1M4 15A11 11 0 0 1 15 5M8 15a7 7 0 0 1 7-6", <circle cx="13.500" cy="13.500" r="1.500" fill="#fff" stroke="none" />)}</TrayButton>
      <TrayButton aria-label="Volume">{thin(21, 16, "M1 5.500h3l4-4v13l-4-4H1zM11 6q1.500 2 0 4M14 3.500q3.500 4.500 0 9M17 1q6 7 0 14")}</TrayButton>
      <Clock>10:59<br />04/11/2023</Clock>
      <Notifications aria-label="Notifications">{thin(20, 20, "M1 1h18v15h-6l-3 3v-3H1z")}</Notifications>
      <ShowDesktop />
    </Tray>
  </Taskbar>
);

export default function App() {
  return (
    <Desktop>
      <GlobalStyle />
      <BrowserChrome />
      <Page>
        <ConsoleHeader />
        <Body>
          <Rail aria-label="App Engine">
            <RailCell $edge="bottom"><AppEngine size={40} color="#757575" core="#555" /></RailCell>
            <RailList>
              {railIcons.map((r, i) => (
                <RailLink key={r.name} href={`#${i}`} aria-label={r.name} $active={i === 0}>{r.icon}</RailLink>
              ))}
            </RailList>
            <RailCell $edge="top"><ReleaseNotes /></RailCell>
            <RailCell $edge="top"><ExpandRail /></RailCell>
          </Rail>
          <Dashboard />
        </Body>
      </Page>
      <WindowsTaskbar />
    </Desktop>
  );
}
